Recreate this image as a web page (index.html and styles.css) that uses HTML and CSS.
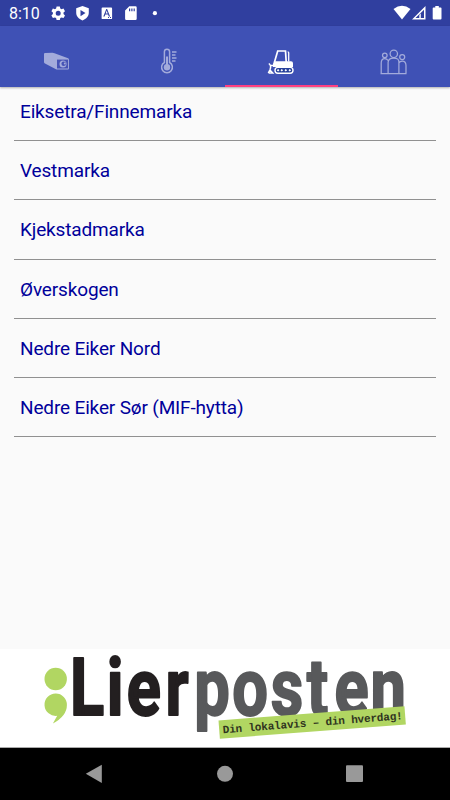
FILE: index.html
```html
<!DOCTYPE html>
<html lang="no">
<head>
<meta charset="utf-8">
<meta name="viewport" content="width=device-width">
<title>Løyper</title>
<link rel="stylesheet" href="styles.css">
</head>
<body>
<div class="screen">
  <header class="status">
    <span class="clock">8:10</span>
    <svg class="status-icons" width="110" height="26" viewBox="50 0 110 26" fill="#fff">
      <path fill-rule="evenodd" d="M56.6 6.5h3.2l.5 2 1.2.7 2-.6 1.5 2.6-1.5 1.4v1.4l1.5 1.4-1.5 2.6-2-.6-1.2.7-.5 2h-3.2l-.5-2-1.2-.7-2 .6-1.5-2.6 1.5-1.4v-1.4l-1.5-1.4 1.5-2.6 2 .6 1.2-.7zM58.2 10.8a2.5 2.5 0 1 0 0 5a2.5 2.5 0 1 0 0-5z"/>
      <path fill-rule="evenodd" d="M82.500 6l6.300 2.300v4.500c0 3.500-2.400 6.200-6.300 7.600-3.900-1.400-6.300-4.100-6.300-7.600V8.300zM80.500 9.900v6.400l5-3.200z"/>
      <path fill-rule="evenodd" d="M102.500 7.500h8.700q.9 0 .9.900v9.800q0 .9-.9.900h-8.700q-.9 0-.9-.9V8.400q0-.9.900-.9zM106.300 9l-3 7.400h1.300l.7-1.900h2.800l.7 1.900h1.300l-3-7.400zM106.700 10.500l1 2.900h-2zM108 17h1v1h-1zM110 17h1v1h-1z"/>
      <path fill-rule="evenodd" d="M129.300 6.300h6.200q1.200 0 1.200 1.200v11.200q0 1.200-1.200 1.200h-9.200q-1.200 0-1.200-1.200v-8.200zM129 8.500v2.700h1.200V8.500zM131.300 8.500v2.700h1.200V8.500zM133.600 8.500v2.700h1.200V8.500z"/>
      <circle cx="154.900" cy="13.200" r="2.100"/>
    </svg>
    <svg class="signal-icons" width="56" height="26" viewBox="390 0 56 26" fill="#fff">
      <path d="M393.500 9q8.500-6.500 17 0l-8.500 10.500z"/>
      <path fill-rule="evenodd" d="M425.500 6v13.500H412zM424 9.700L415.500 18h3.800v-3l1.500-1.600v4.600h3.200z"/>
      <path d="M435.300 6h3.500v1.400h1.800q.9 0 .9.900v10.300q0 .9-.9.900h-7q-.9 0-.9-.9V8.300q0-.9.900-.9h1.700z"/>
    </svg>
  </header>

  <nav class="tabs">
    <a class="tab">
      <svg width="28" height="28" viewBox="42 48 28 28">
        <path fill="#a3abdb" d="M44 54q0-1 1-1l7.500-.2q1 0 2 .4l13.600 5q.8.300.8 1.200v9q0 1-1 1H57.500q-1 0-2-.5l-10.500-5.500q-1-.5-1-1.500z"/>
        <path fill="#4653b5" d="M57 59.600h11v8.900H57z"/>
        <circle cx="63" cy="64" r="3.500" fill="#a3abdb"/>
        <circle cx="63.700" cy="63.800" r="2.300" fill="#4653b5"/>
        <circle cx="64.800" cy="63.600" r="1" fill="#a3abdb"/>
      </svg>
    </a>
    <a class="tab">
      <svg width="28" height="28" viewBox="155 48 28 28" fill="none" stroke="#a3abdb">
        <path stroke-width="1.500" d="M164.400 62.500V51.800a2.600 2.600 0 0 1 5.200 0V62.500a5.400 5.400 0 1 1-5.200 0z"/>
        <path stroke-width="2" d="M167 56.500v9"/>
        <circle cx="167" cy="67.200" r="3.200" fill="#a3abdb" stroke="none"/>
        <path stroke-width="1.500" d="M172 52h4.500M172 55h3.500M172 58h4.500M172 61h3.500"/>
      </svg>
    </a>
    <a class="tab tab-active">
      <svg width="28" height="28" viewBox="267 48 28 28" fill="none" stroke="#fff">
        <path stroke-width="1.700" d="M274.500 62l3.200-11h7.800l.7 11"/>
        <path stroke-width="1.300" d="M288.700 61.500V52.800q0-1-1-1"/>
        <path fill="#fff" stroke="none" d="M274 61.200h17q2 0 2 2V67h-20v-3.500z"/>
        <path stroke-width="1.500" d="M274 65.500h-3M268.800 63.500q2.800 2 1.300 6l-1.800 3.700M269.500 69.500l3.200 3.500h-4"/>
        <rect x="275" y="67.400" width="18" height="5.800" rx="2.900" fill="#27419b" stroke-width="1.400"/>
        <path fill="#fff" stroke="none" d="M276.800 70.300l1.300-1.300 1.300 1.300-1.300 1.300zM280.500 70.300l1.300-1.300 1.300 1.300-1.300 1.300zM284.500 70.300l1.300-1.300 1.300 1.300-1.300 1.300zM288.500 70.300l1.300-1.300 1.300 1.300-1.300 1.300z"/>
      </svg>
    </a>
    <a class="tab">
      <svg width="28" height="28" viewBox="379.500 48 28 28" fill="none" stroke="#a3abdb" stroke-width="1.250">
        <circle cx="393.300" cy="53.800" r="3.700"/>
        <circle cx="384.300" cy="55.300" r="2.300"/>
        <circle cx="401.700" cy="57" r="2.500"/>
        <path d="M387.600 73.500V62.500q0-4.500 5.600-4.500t5.200 4.500V73.500M380.700 73.500V63q0-4.500 3.600-4.500 2 0 3.300 2M398.400 63q1-2 3.300-2 3.800 0 3.800 4.500v8M380 73.500h26"/>
      </svg>
    </a>
  </nav>

  <main class="list">
    <div class="row">Eiksetra/Finnemarka</div>
    <div class="row">Vestmarka</div>
    <div class="row">Kjekstadmarka</div>
    <div class="row">Øverskogen</div>
    <div class="row">Nedre Eiker Nord</div>
    <div class="row">Nedre Eiker Sør (MIF-hytta)</div>
  </main>

  <footer class="sponsor">
    <svg class="logo" width="450" height="98" viewBox="0 649 450 98">
      <g fill="#b1d662">
        <circle cx="55.700" cy="679" r="11.200"/>
        <path d="M55.700 693.500a11.200 11.200 0 0 1 11.200 11.500q0 11-14 18.500l4.300-7.700a11.200 11.200 0 1 1-1.500-22.300z"/>
      </g>
      <g transform="scale(.8 1)" class="wordmark">
        <text class="lier" x="87.500 133.500 158.300 207" y="715">Lier</text>
        <text class="posten" x="242.800 290.300 338.500 383.500 418 463" y="715">posten</text>
      </g>
      <g transform="translate(218.500 720.500) rotate(-4.400)">
        <rect width="186.500" height="18.300" fill="#b1d662"/>
        <text class="slogan" x="3.500" y="13" textLength="180.500">Din lokalavis – din hverdag!</text>
      </g>
    </svg>
  </footer>

  <nav class="system">
    <svg width="450" height="52" viewBox="0 748 450 52" fill="#999">
      <path d="M85.800 773.800L101.800 764.800V783z"/>
      <circle cx="225" cy="773.800" r="8"/>
      <rect x="346" y="765.200" width="17" height="16.800" rx="1"/>
    </svg>
  </nav>
</div>
</body>
</html>
```
FILE: styles.css
```css
body {
  margin: 0;
  font-family: Roboto, "Liberation Sans", sans-serif;
}

svg {
  display: block;
}

.screen {
  width: 450px;
  height: 800px;
  display: flex;
  flex-direction: column;
  background: #fafafa;
  overflow: hidden;
}

.status {
  display: flex;
  align-items: center;
  height: 26px;
  flex: none;
  padding: 0 4px 0 9px;
  background: #303f9f;
  color: #fff;
}

.clock {
  width: 41px;
  font-size: 16px;
  line-height: 26px;
  padding-top: 2px;
  box-sizing: border-box;
}

.signal-icons {
  margin-left: auto;
}

.tabs {
  display: grid;
  grid-template-columns: repeat(4, 1fr);
  height: 61px;
  flex: none;
  background: #3f51b5;
  box-shadow: 0 1px 2px rgba(0, 0, 0, .3);
}

.tab {
  display: flex;
  justify-content: center;
  align-items: flex-start;
  padding-top: 22px;
}

.tab-active {
  border-bottom: 2px solid #ff4081;
}

.list {
  flex: 1;
  padding: 0 14px;
}

.row {
  box-sizing: border-box;
  height: 59.200px;
  padding: 0 6px;
  border-bottom: 1px solid #909090;
  color: #00009a;
  font-size: 19px;
  letter-spacing: -.15px;
  line-height: 60px;
}

.row:first-child {
  height: 54.200px;
  line-height: 50px;
}

.sponsor {
  box-sizing: border-box;
  flex: none;
  height: 99px;
  background: #fff;
  border-bottom: 1px solid #aaa;
}

.logo {
  overflow: visible;
}

.wordmark {
  font-size: 79px;
  font-weight: 700;
  stroke-width: 2px;
  stroke-linejoin: round;
}

.lier {
  fill: #231f20;
  stroke: #231f20;
}

.posten {
  fill: #58595b;
  stroke: #58595b;
}

.slogan {
  font-family: "Liberation Mono", monospace;
  font-size: 11px;
  font-weight: 700;
  fill: #30351f;
}

.system {
  flex: none;
  height: 52px;
  background: #000;
}
```
